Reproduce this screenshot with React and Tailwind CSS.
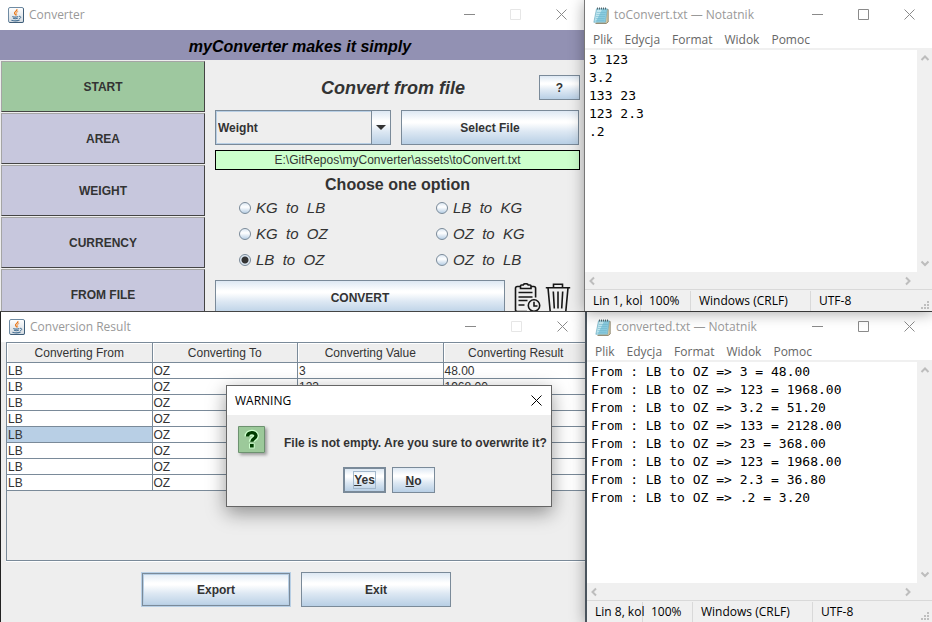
import React from "react";
import clsx from "clsx";

const ui = "font-['Open_Sans','Noto_Sans',sans-serif]";
const gradient =
  "bg-[linear-gradient(#dde8f3,#ffffff_30%,#ffffff_36%,#dde8f3_62%,#b8cfe5)] font-bold text-[#333333]";
const metal = clsx(gradient, "border border-[#7a8a99]");

function JavaIcon() {
  return (
    <svg width="16" height="16" viewBox="0 0 16 16" className="shrink-0" aria-hidden="true">
      <defs>
        <linearGradient id="java-tile" x1="0" y1="0" x2="0" y2="1">
          <stop offset="0" stopColor="#ffffff" />
          <stop offset="1" stopColor="#d3dae0" />
        </linearGradient>
      </defs>
      <rect x="0.5" y="0.5" width="15" height="15" rx="1.5" fill="url(#java-tile)" stroke="#6f8ba3" />
      <path d="M15.5 1.5v13a1 1 0 0 1-1 1h-13" fill="none" stroke="#3f5d78" />
      <path d="M8.6 2.2c1.4 1.6-2.9 2.6-2 4.3.3.6 1 1 1.2 1.9" fill="none" stroke="#e8771a" strokeWidth="1.3" />
      <path d="M10.2 4.4C8.4 5.3 7.8 6 8.5 7.1c.4.6.2 1-.1 1.4" fill="none" stroke="#f0964a" strokeWidth="1" />
      <path d="M4.3 9.500c1.500.6 4.500.6 6 0M5 11.300c1.400.5 3.400.5 4.800 0M3.400 13.300c2.400.7 6 .7 8.200-.2" fill="none" stroke="#4a7396" strokeWidth="1.1" />
      <path d="M11 9.300c2.200-.4 2.500 1.700.2 2.400" fill="none" stroke="#4a7396" />
    </svg>
  );
}

function NotepadIcon() {
  return (
    <svg width="16" height="17" viewBox="0 0 16 17" className="shrink-0" aria-hidden="true">
      <path d="M13.5 2.500h1.700V15l-2 1.500H2.500" fill="#d9c9a3" stroke="#7f775f" strokeWidth="0.8" />
      <path d="M3.500 1.800h10.800L12.500 15.300H.8z" fill="#8acbdf" stroke="#6fa9bc" strokeWidth="0.6" />
      <path d="M4 2.500h5L3 14.600H1.600z" fill="#c2e7f0" />
      <path d="M3.800 5.500h9M3.400 7.500h9M3 9.500h9M2.700 11.500h9M2.400 13.300h9" stroke="#6ab3c9" strokeWidth="0.5" />
      <path d="M4.500.5v2M6.500.5v2M8.500.5v2M10.500.5v2M12.500.5v2" stroke="#46585f" strokeWidth="0.9" />
    </svg>
  );
}

function ClipboardClockIcon() {
  return (
    <svg width="28" height="32" viewBox="0 0 28 32" fill="none" stroke="#161616" strokeWidth="1.6" aria-hidden="true">
      <path d="M6.500 3.500H3.300A1.800 1.800 0 0 0 1.500 5.300v21.400a1.800 1.800 0 0 0 1.800 1.800H13M17 3.500h2.800a1.800 1.800 0 0 1 1.800 1.800V14.500" />
      <path d="M6.500 5.500V3c0-.6.4-1 1-1h1.700c.3-1 1-1.300 2.500-1.300s2.200.3 2.500 1.300h1.800c.6 0 1 .4 1 1v2.500z" />
      <path d="M4.500 9.500h14M4.500 14h14M4.500 17.500h9M4.500 22h6" />
      <circle cx="20" cy="22.500" r="5.700" fill="#eeeeee" />
      <path d="M20 18.800v4.200h3.500" />
    </svg>
  );
}

function TrashIcon() {
  return (
    <svg width="26" height="32" viewBox="0 0 26 32" fill="none" stroke="#161616" strokeWidth="1.6" aria-hidden="true">
      <path d="M.8 4.700h24.400M8.500 4.500V1.200h9v3.300M3 4.700l2.300 24.800h15.400L23 4.700" />
      <path d="M8.300 8.500l1 17M13 8.500v17M17.700 8.500l-1 17" />
    </svg>
  );
}

function Caption({ icon, title, label, muted, className }) {
  const tone = "stroke-[#8a8a8a]";
  return (
    <header className={clsx("flex h-[30px] shrink-0 items-center", className)}>
      {icon}
      <h2 className={clsx(ui, "ml-[5px] flex-1 whitespace-nowrap text-[12px] text-[#999999]")}>{title}</h2>
      <div className="flex pb-px">
        <button aria-label={`Minimize ${label}`} className="flex w-[46px] items-center justify-center">
          <svg width="11" height="11" className={tone}><path d="M0 5.500h11" /></svg>
        </button>
        <button aria-label={`Maximize ${label}`} className="flex w-[46px] items-center justify-center">
          <svg width="11" height="11" fill="none" className={muted ? "stroke-[#e6e6e6]" : tone}>
            <path d="M.5.5h10v10H.5z" />
          </svg>
        </button>
        <button aria-label={`Close ${label}`} className="flex w-[46px] items-center justify-center">
          <svg width="11" height="11" className={tone}><path d="M.5.500l10 10M10.500.500l-10 10" /></svg>
        </button>
      </div>
    </header>
  );
}

const arrows = {
  up: "M1.500 6L5 2.500L8.500 6",
  down: "M1.500 2.500L5 6L8.500 2.500",
  left: "M6 1.500L2.500 5L6 8.500",
  right: "M3 1.500L6.500 5L3 8.500",
};

function ScrollArrow({ dir }) {
  return (
    <button aria-label={`Scroll ${dir}`} className="flex h-4 w-4 items-center justify-center">
      <svg width="10" height="10" fill="none" className="stroke-[#bdbdbd] stroke-2"><path d={arrows[dir]} /></svg>
    </button>
  );
}

function Notepad({ file, text, position, className }) {
  return (
    <section className={clsx("relative z-10 flex flex-col bg-white shadow-[0_2px_14px_rgba(0,0,0,0.35)]", ui, className)}>
      <Caption icon={<NotepadIcon />} title={`${file} — Notatnik`} label={file} className="pl-2" />
      <nav className="flex h-5 items-center gap-3 border-b-2 border-[#f0f0f0] pt-[2px] pl-2 text-[12px] leading-4 text-[#666666]">
        {["Plik", "Edycja", "Format", "Widok", "Pomoc"].map((m) => (
          <button key={m}>{m}</button>
        ))}
      </nav>
      <div className="flex flex-1">
        <textarea
          aria-label={file}
          spellCheck={false}
          defaultValue={text}
          className="min-w-0 flex-1 resize-none overflow-hidden whitespace-pre pt-px pl-1 font-['DejaVu_Sans_Mono',monospace] text-[13px] leading-[18px] text-black outline-none"
        />
        <div className="flex w-[15px] flex-col items-center justify-between bg-[#f0f0f0] pt-px">
          <ScrollArrow dir="up" />
          <ScrollArrow dir="down" />
        </div>
      </div>
      <div className="flex h-[17px] items-center justify-between bg-[#f0f0f0] pr-4">
        <ScrollArrow dir="left" />
        <ScrollArrow dir="right" />
      </div>
      <footer className="flex h-[22px] items-center border-t border-[#d9d9d9] bg-[#f0f0f0] text-[12px] leading-5 text-black">
        <span className="w-14 whitespace-nowrap border-r border-[#d9d9d9] pl-2">{position}</span>
        <span className="w-[50px] border-r border-[#d9d9d9] pl-2">100%</span>
        <span className="w-[120px] border-r border-[#d9d9d9] pl-2">Windows (CRLF)</span>
        <span className="flex-1 pl-2">UTF-8</span>
        <svg width="10" height="10" className="mr-px self-end fill-[#bfbfbf]" aria-hidden="true">
          <path d="M6 0h2v2H6zM6 3h2v2H6zM3 3h2v2H3zM6 6h2v2H6zM3 6h2v2H3zM0 6h2v2H0z" />
        </svg>
      </footer>
    </section>
  );
}

const sections = ["START", "AREA", "WEIGHT", "CURRENCY", "FROM FILE"];
const options = ["KG  to  LB", "LB  to  KG", "KG  to  OZ", "OZ  to  KG", "LB  to  OZ", "OZ  to  LB"];

function Converter() {
  return (
    <section className="flex min-w-0 flex-1 flex-col overflow-hidden bg-[#eeeeee]">
      <Caption icon={<JavaIcon />} title="Converter" label="Converter" muted className="bg-white pl-2" />
      <h1 className="flex h-[30px] shrink-0 items-center justify-center bg-[#9291b3] pt-[3px] pl-4 text-[16px] font-bold italic text-black">
        myConverter makes it simply
      </h1>
      <div className="flex">
        <nav className="flex w-[205px] flex-col gap-px pt-px pl-px">
          {sections.map((s) => (
            <button
              key={s}
              className={clsx(
                "h-[51px] border border-t-[#a5a5a5] border-r-[#444444] border-b-[#444444] border-l-[#a5a5a5] text-[12px] font-bold text-[#333333]",
                s === "START" ? "bg-[#9ec89f]" : "bg-[#c7c7dd]"
              )}
            >
              {s}
            </button>
          ))}
        </nav>
        <div className="flex-1 pt-[15px] pr-1 pl-[10px]">
          <div className="flex h-[25px] items-center">
            <h2 className="flex-1 pt-[2px] pl-8 text-center text-[18px] font-bold italic text-[#333333]">Convert from file</h2>
            <button className={clsx(metal, "h-[25px] w-[41px] text-[12px]")}>?</button>
          </div>
          <div className="mt-[10px] flex gap-[10px] pr-px">
            <div className="relative flex-1">
              <select
                aria-label="Unit type"
                className="h-[35px] w-full appearance-none border border-[#7a8a99] bg-[#eeeeee] pl-[2px] text-[12px] font-bold text-[#333333] shadow-[inset_0_0_0_1px_#b8cfe5]"
              >
                <option>Weight</option>
              </select>
              <span className={clsx(metal, "pointer-events-none absolute inset-y-0 right-0 flex w-5 items-center justify-center")}>
                <svg width="10" height="5" className="fill-[#333333]"><path d="M0 0h10L5 5z" /></svg>
              </span>
            </div>
            <button className={clsx(metal, "h-[35px] flex-1 text-[12px]")}>Select File</button>
          </div>
          <p className="mt-[5px] h-5 border border-black bg-[#ccffcc] text-center text-[12px] leading-[19px] text-[#333333]">
            E:\GitRepos\myConverter\assets\toConvert.txt
          </p>
          <fieldset>
            <legend className="w-full pt-[5px] text-center text-[16px] leading-[20px] font-bold text-[#333333]">
              Choose one option
            </legend>
            <div className="grid grid-cols-[197px_1fr] pl-6">
              {options.map((o) => (
                <label key={o} className="flex h-[26px] items-center gap-[5px] whitespace-pre text-[15px] italic text-[#333333]">
                  <input
                    type="radio"
                    name="option"
                    defaultChecked={o === "LB  to  OZ"}
                    className="h-3 w-3 appearance-none rounded-full border border-[#7a8a99] bg-[linear-gradient(#dde8f3,#ffffff_40%,#b8cfe5)] checked:bg-[radial-gradient(circle,#333333_3px,#dde8f3_4px)]"
                  />
                  <span className="pt-px">{o}</span>
                </label>
              ))}
            </div>
          </fieldset>
          <div className="mt-[7px] flex">
            <button className={clsx(metal, "h-[35px] flex-1 text-[12px]")}>CONVERT</button>
            <button aria-label="Show history" className="mt-[2px] ml-[9px]"><ClipboardClockIcon /></button>
            <button aria-label="Delete" className="mt-[2px] mr-[9px] ml-[3px]"><TrashIcon /></button>
          </div>
        </div>
      </div>
    </section>
  );
}

const rows = [
  ["3", "48.00"],
  ["123", "1968.00"],
  ["3.2", "51.20"],
  ["133", "2128.00"],
  ["23", "368.00"],
  ["123", "1968.00"],
  ["2.3", "36.80"],
  [".2", "3.20"],
];

function ConversionResult() {
  return (
    <section className="relative min-w-0 flex-1 overflow-hidden border-l border-[#222222] bg-[#eeeeee]">
      <Caption icon={<JavaIcon />} title="Conversion Result" label="Conversion Result" muted className="bg-white pl-2" />
      <div className="ml-[5px] h-[219px] border-t border-b border-l border-[#7a8a99] shadow-[0_1px_0_#ffffff]">
        <table className="w-[calc(100%+4px)] table-fixed border-separate border-spacing-0 text-[12px] text-[#333333]">
          <thead>
            <tr>
              {["Converting From", "Converting To", "Converting Value", "Converting Result"].map((h) => (
                <th key={h} className="h-5 border-r border-b border-[#7a8a99] p-0 pt-[2px] text-center font-normal leading-[17px] shadow-[inset_1px_1px_0_#ffffff]">
                  {h}
                </th>
              ))}
            </tr>
          </thead>
          <tbody>
            {rows.map(([value, result], i) => (
              <tr key={i}>
                {["LB", "OZ", value, result].map((c, j) => (
                  <td
                    key={j}
                    className={clsx(
                      "h-4 border-r border-b border-[#7a8a99] p-0 pt-[2px] pl-px leading-[13px]",
                      i === 4 && j === 0 ? "bg-[#b8cfe5]" : "bg-white"
                    )}
                  >
                    {c}
                  </td>
                ))}
              </tr>
            ))}
          </tbody>
        </table>
      </div>
      <div className="mt-[11px] flex justify-center gap-[10px] pb-[15px] pl-[6px]">
        <button
          className={clsx(
            gradient,
            "h-[35px] w-[150px] border border-[#b8cfe5] text-[12px] shadow-[inset_0_0_0_1px_#7a8a99,inset_0_0_0_2px_#b8cfe5]"
          )}
        >
          Export
        </button>
        <button className={clsx(metal, "h-[35px] w-[150px] text-[12px]")}>Exit</button>
      </div>

      <div
        role="dialog"
        aria-label="WARNING"
        className="absolute top-[73px] left-[225px] w-[326px] border border-[#666666] bg-[#eeeeee] pb-[13px] shadow-[0_6px_18px_rgba(0,0,0,0.4)]"
      >
        <header className="flex h-[29px] items-center justify-between bg-white pl-2">
          <h3 className={clsx(ui, "text-[12px] text-black")}>WARNING</h3>
          <button aria-label="Close WARNING" className="flex w-[30px] items-center justify-center">
            <svg width="11" height="11" className="stroke-black"><path d="M.5.500l10 10M10.500.500l-10 10" /></svg>
          </button>
        </header>
        <div className="flex items-center gap-[19px] pt-[11px] pl-[11px]">
          <svg width="27" height="27" className="shadow-[2px_2px_3px_rgba(0,0,0,0.35)]" aria-hidden="true">
            <path d="M.5.5h26v26H.5z" fill="#9cc99a" stroke="#6d9270" />
            <path d="M9.500 10.500c0-5 8.500-5 8.500-.7 0 3-4.200 2.700-4.200 6" fill="none" stroke="#ccffcc" strokeWidth="6" />
            <path d="M11 17.500h5.700v5H11z" fill="#ccffcc" />
            <path d="M9.500 10.500c0-5 8.500-5 8.500-.7 0 3-4.200 2.700-4.200 6" fill="none" stroke="#003d00" strokeWidth="3.400" />
            <path d="M12 18h3.700v3.500H12z" fill="#003d00" />
          </svg>
          <p className="whitespace-nowrap pt-[6px] text-[12px] font-bold text-[#333333]">File is not empty. Are you sure to overwrite it?</p>
        </div>
        <div className="mt-[14px] flex justify-center gap-[6px] px-1">
          <button className={clsx(gradient, "flex h-[26px] w-[43px] items-center justify-center border-2 border-[#7a8a99] text-[12px]")}>
            <span className="border border-[#a3b8cc] leading-4"><u>Y</u>es</span>
          </button>
          <button className={clsx(metal, "h-[26px] w-[43px] pt-px text-[12px]")}><u>N</u>o</button>
        </div>
      </div>
    </section>
  );
}

const source = "3 123\n3.2\n133 23\n123 2.3\n.2";
const converted = [
  "3 = 48.00",
  "123 = 1968.00",
  "3.2 = 51.20",
  "133 = 2128.00",
  "23 = 368.00",
  "123 = 1968.00",
  "2.3 = 36.80",
  ".2 = 3.20",
]
  .map((r) => `From : LB to OZ => ${r}`)
  .join("\n");

export default function App() {
  return (
    <main className="overflow-hidden bg-white font-['Liberation_Sans',Arial,sans-serif]">
      <div className="relative z-20 flex h-[312px] border-b border-[#444444]">
        <Converter />
        <Notepad file="toConvert.txt" text={source} position="Lin 1, kol" className="w-[348px] border-l border-[#777777]" />
      </div>
      <div className="flex h-[310px]">
        <ConversionResult />
        <Notepad file="converted.txt" text={converted} position="Lin 8, kol" className="w-[347px] border-l-2 border-[#4a545d]" />
      </div>
    </main>
  );
}
